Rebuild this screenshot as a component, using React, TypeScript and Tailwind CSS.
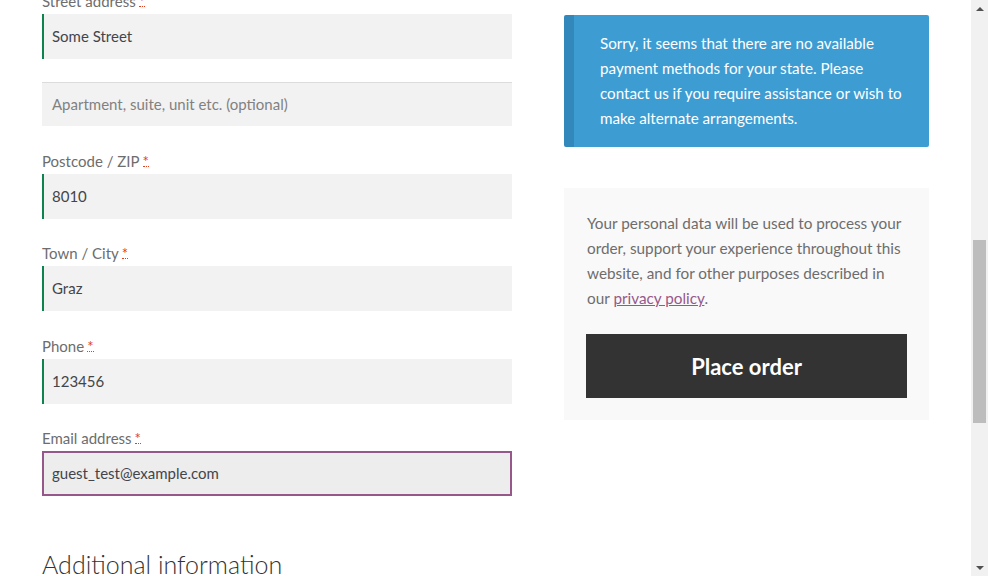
import React from "react";

const font = { fontFamily: "Lato, 'Noto Sans', sans-serif" };

function Req() {
  return (
    <abbr className="text-[#e2401c] no-underline ml-[3px] border-b border-dotted border-[#e2401c] leading-[10px] inline-block">*</abbr>
  );
}

function Field({ label, value, focused, mt }: { label: string; value: string; focused?: boolean; mt: string }) {
  return (
    <div className={"flex flex-col shrink-0 " + mt}>
      <label className="shrink-0 text-[15px] leading-[25px] text-[#6d6d6d] h-[25px]">
        {label}
        <Req />
      </label>
      {focused ? (
        <div className="shrink-0 h-[45px] bg-[#ededed] border-2 border-[#96588a] flex items-center pl-[8px] text-[15px] text-[#43454b]">
          {value}
        </div>
      ) : (
        <div className="shrink-0 h-[45px] bg-[#f2f2f2] border-l-2 border-[#0f834d] flex items-center pl-[8px] text-[15px] text-[#43454b]">
          {value}
        </div>
      )}
    </div>
  );
}

export default function App() {
  return (
    <div className="w-[988px] h-[576px] overflow-hidden bg-white flex" style={font}>
      <div className="flex-1 flex items-start">
        <div className="w-[470px] ml-[42px] flex flex-col -mt-[11px] shrink-0">
          <label className="shrink-0 text-[15px] leading-[25px] text-[#6d6d6d] h-[25px]">
            Street address
            <Req />
          </label>
          <div className="shrink-0 h-[45px] bg-[#f2f2f2] border-l-2 border-[#0f834d] flex items-center pl-[8px] text-[15px] text-[#43454b]">
            Some Street
          </div>
          <div className="shrink-0 h-[44px] mt-[23px] bg-[#f2f2f2] border-t border-[#dcdcdc] flex items-center pl-[10px] text-[15px] text-[#818181]">
            Apartment, suite, unit etc. (optional)
          </div>
          <Field label="Postcode / ZIP" value="8010" mt="mt-[23px]" />
          <Field label="Town / City" value="Graz" mt="mt-[22px]" />
          <Field label="Phone" value="123456" mt="mt-[23px]" />
          <Field label="Email address" value="guest_test@example.com" mt="mt-[22px]" focused />
          <h3 className="shrink-0 mt-[52px] text-[25px] font-light text-[#333333] leading-[32px] whitespace-nowrap">Additional information</h3>
        </div>
        <div className="w-[365px] ml-[52px] flex flex-col pt-[15px] shrink-0">
          <div className="shrink-0 bg-[#3d9cd2] border-l-[10px] border-[#3288bb] rounded-[2px] pl-[26px] pr-[20px] pt-[16px] pb-[16px] text-white text-[15.2px] leading-[25px] h-[132px]">
            Sorry, it seems that there are no available payment methods for your state. Please contact us if you require assistance or wish to make alternate arrangements.
          </div>
          <div className="shrink-0 mt-[41px] bg-[#f9f9f9] px-[22px] pt-[23px] pb-[22px] flex flex-col">
            <p className="text-[15.3px] leading-[25px] text-[#6d6d6d] pl-px">
              Your personal data will be used to process your order, support your experience throughout this website, and for other purposes described in our{" "}
              <a className="text-[#96588a] underline">privacy policy</a>.
            </p>
            <button className="shrink-0 mt-[23px] h-[64px] bg-[#333333] text-white text-[22px] font-bold">Place order</button>
          </div>
        </div>
      </div>
      <div className="w-[17px] h-full bg-[#f1f1f1] flex flex-col items-center shrink-0">
        <div className="h-[17px] flex items-center justify-center">
          <svg width="8" height="4" viewBox="0 0 8 4"><path d="M0 4 L4 0 L8 4 Z" fill="#505050" /></svg>
        </div>
        <div className="h-[223px]" />
        <div className="w-[13px] h-[183px] bg-[#bdbdbd]" />
        <div className="flex-1" />
        <div className="h-[17px] flex items-center justify-center">
          <svg width="8" height="4" viewBox="0 0 8 4"><path d="M0 0 L4 4 L8 0 Z" fill="#505050" /></svg>
        </div>
      </div>
    </div>
  );
}
